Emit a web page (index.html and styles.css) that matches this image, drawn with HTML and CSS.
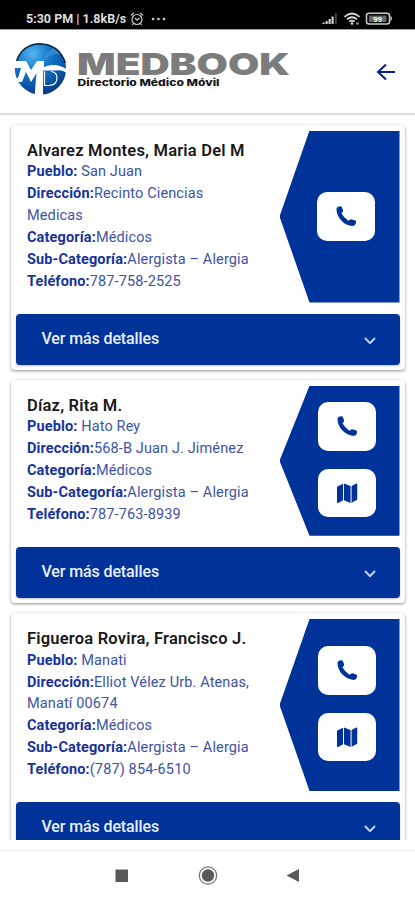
FILE: index.html
```html
<!DOCTYPE html>
<html lang="es">
<head>
<meta charset="utf-8">
<title>MEDBOOK - Directorio Médico Móvil</title>
<link rel="stylesheet" href="styles.css">
</head>
<body>
<svg class="defs" width="0" height="0" aria-hidden="true">
  <symbol id="phone" viewBox="0 0 21 21"><path d="M2.200 .8 4.200 .3Q5.600 .2 6.200 1.500L7.200 4.300Q7.500 5.500 6.600 6.400L5.600 7.500Q7.800 11.800 12.600 15L14.300 14Q15.300 13.500 16.400 13.800L19.300 14.500Q20.700 15 20.600 16.400L20.200 18.300Q19.700 19.900 18 20.300C9.500 21.200 .3 12 .5 3.200 .6 2 1.200 1.200 2.200 .8Z"/></symbol>
  <symbol id="map" viewBox="0 0 21 21"><path d="M0 4.500Q0 3.700.8 3.300L6.200 .8V17.600L1.200 20.400Q0 20.900 0 19.800ZM7.200.5 13.900 3.200V20.500L7.200 17.600ZM14.900 3.200 19.800.6Q21 .1 21 1.300V16.300Q21 17.100 20.300 17.500L14.900 20.300Z"/></symbol>
  <symbol id="chevron" viewBox="0 0 12 8"><path d="M1 1 6 6.200 11 1" fill="none" stroke="#c5d5f5" stroke-width="1.900"/></symbol>
</svg>
<div class="screen">
  <div class="status">
    <span class="clock">5:30 PM | 1.8kB/s</span>
    <svg class="alarm" viewBox="0 0 14 14"><g fill="none" stroke="#ccc" stroke-width="1.200"><circle cx="7" cy="7.500" r="5"/><path d="M1 3.500 3.800 1M13 3.500 10.200 1M4.800 6 7 8 9.600 6M3.500 11.500 2.300 13M10.500 11.500l1.200 1.500"/></g></svg>
    <svg class="dots" viewBox="0 0 15 4"><g fill="#ccc"><circle cx="2" cy="2" r="1.300"/><circle cx="7.500" cy="2" r="1.300"/><circle cx="13" cy="2" r="1.300"/></g></svg>
    <svg class="signals" viewBox="0 0 72 14">
      <g fill="#ccc"><path d="M.5 10.500h2.200V12H.5zM3.500 9h2.200v3H3.500zM6.500 7h2.200v5H6.500zM9.500 4.500h2.200V12H9.500z"/><path fill="#444" d="M13 1h1.800v11H13z"/></g>
      <g fill="none" stroke="#ddd" stroke-width="1.700"><path d="M22.500 4.800Q30 -1.800 37.500 4.800M25 7.300Q30 3.200 35 7.300M27.300 9.700Q30 7.500 32.700 9.700"/></g>
      <circle cx="30" cy="11.500" r="1.300" fill="#ddd"/><path d="M34 10.500h3v2h-3z" fill="#888"/>
      <rect x="44.500" y="1.300" width="23" height="10.800" rx="2.500" fill="none" stroke="#ccc" stroke-width="1.500"/><path d="M68.500 3.500q3 3 0 6z" fill="#ccc"/><rect x="47" y="3.500" width="17.500" height="6.500" fill="#666"/>
      <text x="51" y="10" class="battery">99</text>
    </svg>
  </div>
  <header class="header">
    <svg class="logo" viewBox="0 0 280 60" role="img">
      <defs><radialGradient id="globe" cx=".35" cy=".2" r=".8"><stop offset="0" stop-color="#57b5ef"/><stop offset=".4" stop-color="#1779ca"/><stop offset=".8" stop-color="#0a55ab"/><stop offset="1" stop-color="#063c80"/></radialGradient><clipPath id="disc"><circle cx="26.500" cy="30" r="27"/></clipPath></defs>
      <circle cx="26.500" cy="30" r="25.600" fill="url(#globe)"/>
      <path d="M31 22Q34 14 48 15Q46 11 42 8Q32 12 31 22Z" fill="#4ea1e4" opacity=".5"/>
      <path d="M2.500 22Q8 6 25 4.700Q45 5 51.500 24" fill="none" stroke="#0b2446" stroke-width="1.400"/>
      <g clip-path="url(#disc)">
        <path d="M-1 22H12L17 31 23 22H30V28Q42 23 54 31V36Q50 30.500 42 31.500H29V58H20.500L22.500 34 17 43 12 33 8 43H-1V39H4L7 29H-1Z" fill="#fff"/>
        <path d="M30.500 32.500V46.500H35Q43 46 43 39 43 33 37 32.500" fill="none" stroke="#fff" stroke-width="1.200"/>
      </g>
      <text class="brand" x="63" y="35.700" textLength="213" lengthAdjust="spacingAndGlyphs">MEDBOOK</text>
      <text class="tagline" x="63.500" y="47.200" textLength="142" lengthAdjust="spacingAndGlyphs">Directorio Médico Móvil</text>
    </svg>
    <svg class="back" viewBox="0 0 20 18"><path d="M19 9H2M10 1.500 2 9 10 16.500" fill="none" stroke="#071d91" stroke-width="2"/></svg>
  </header>
  <main class="list">
    <article class="card">
      <div class="top tall">
        <div class="info"><h2>Alvarez Montes, Maria Del M</h2>
          <p><b>Pueblo:</b> San Juan</p><p><b>Dirección:</b>Recinto Ciencias<br>Medicas</p><p><b>Categoría:</b>Médicos</p><p><b>Sub-Categoría:</b>Alergista – Alergia</p><p><b>Teléfono:</b>787-758-2525</p></div>
        <div class="actions single"><a class="btn"><svg><use href="#phone"/></svg></a></div>
      </div>
      <div class="more"><span>Ver más detalles</span><svg><use href="#chevron"/></svg></div>
    </article>
    <article class="card">
      <div class="top">
        <div class="info"><h2>Díaz, Rita M.</h2>
          <p><b>Pueblo:</b> Hato Rey</p><p><b>Dirección:</b>568-B Juan J. Jiménez</p><p><b>Categoría:</b>Médicos</p><p><b>Sub-Categoría:</b>Alergista – Alergia</p><p><b>Teléfono:</b>787-763-8939</p></div>
        <div class="actions"><a class="btn"><svg><use href="#phone"/></svg></a><a class="btn"><svg><use href="#map"/></svg></a></div>
      </div>
      <div class="more"><span>Ver más detalles</span><svg><use href="#chevron"/></svg></div>
    </article>
    <article class="card">
      <div class="top tall">
        <div class="info"><h2>Figueroa Rovira, Francisco J.</h2>
          <p><b>Pueblo:</b> Manati</p><p><b>Dirección:</b>Elliot Vélez Urb. Atenas,<br>Manatí 00674</p><p><b>Categoría:</b>Médicos</p><p><b>Sub-Categoría:</b>Alergista – Alergia</p><p><b>Teléfono:</b>(787) 854-6510</p></div>
        <div class="actions"><a class="btn"><svg><use href="#phone"/></svg></a><a class="btn"><svg><use href="#map"/></svg></a></div>
      </div>
      <div class="more"><span>Ver más detalles</span><svg><use href="#chevron"/></svg></div>
    </article>
  </main>
  <nav class="nav">
    <svg viewBox="0 0 415 50"><rect x="115.500" y="18.500" width="12.500" height="12.500" fill="#5a5a5a"/><circle cx="208" cy="24.500" r="8.700" fill="none" stroke="#777" stroke-width="1.300"/><circle cx="208" cy="24.500" r="6.200" fill="#5a5a5a"/><path d="M286.500 24.500 299 18V31Z" fill="#5a5a5a"/></svg>
  </nav>
</div>
</body>
</html>
```
FILE: styles.css
```css
* { box-sizing: border-box; }
body { margin: 0; background: #fff; font-family: Roboto, "Liberation Sans", sans-serif; }
.defs { display: block; height: 0; }
.screen { display: flex; flex-direction: column; width: 415px; height: 900px; overflow: hidden; }
.status { display: flex; align-items: center; flex: none; height: 29px; padding: 8px 26px 0; background: #000; color: #ddd; }
.clock { width: 104px; font-size: 12.5px; font-weight: 700; line-height: 20px; white-space: nowrap; }
.alarm { width: 14px; height: 14px; }
.dots { width: 15px; height: 4px; margin-left: 7px; }
.signals { width: 72px; height: 14px; margin-left: auto; margin-right: -5px; }
.battery { font: 700 8px Roboto, sans-serif; fill: #fff; }
.header { display: flex; flex: none; justify-content: space-between; align-items: center; height: 86px; padding: 0 19px 0 14px; border-top: 1px solid #999; border-bottom: 2px solid #dcdcdc; }
.logo { width: 280px; height: 60px; margin-top: -6px; }
.brand { font: 900 30px Inter, sans-serif; fill: #7c7c7c; }
.tagline { font: 800 9.2px Inter, sans-serif; fill: #151515; }
.back { width: 20px; height: 18px; }
.list { display: flex; flex-direction: column; gap: 10px; height: 725px; padding: 9.5px 10px 0 11px; overflow: hidden; }
.card { flex: none; padding: 6px 5.5px 5.200px 5px; border-radius: 4px; background: #fff; box-shadow: 0 1px 3px rgba(0,0,0,.45); }
.top { display: flex; justify-content: space-between; height: 150px; margin-bottom: 11px; }
.top.tall { height: 172px; }
.info { padding: 10.300px 0 0 11px; color: #3c53a4; white-space: nowrap; }
h2 { margin: 0; font-size: 16.5px; line-height: 20.500px; font-weight: 600; letter-spacing: .2px; color: #181818; }
p { margin: 0; font-size: 14.500px; line-height: 21.900px; letter-spacing: .13px; }
b { font-weight: 700; color: #17339a; }
.actions { display: flex; flex: none; flex-direction: column; align-items: center; justify-content: center; gap: 18px; width: 120px; padding: 0 0 2px 15.500px; background: #003399; clip-path: polygon(25% 0, 100% 0, 100% 100%, 25% 100%, 0 50%); }
.single { padding: 0 0 0 13px; }
.btn { display: flex; align-items: center; justify-content: center; width: 58px; height: 48.500px; border-radius: 10px; background: #fff; }
.btn svg { width: 20.500px; height: 20.500px; fill: #003399; }
.more { display: flex; align-items: center; justify-content: space-between; height: 51px; padding: 0 23.500px 0 25.500px; border-radius: 4px; background: #003399; color: #e9efff; box-shadow: 0 1px 2px rgba(0,0,0,.25); }
.more span { margin-top: -1px; font-size: 16px; font-weight: 500; letter-spacing: -.12px; }
.more svg { width: 12px; height: 8px; margin-top: 4px; }
.nav { flex: none; height: 50px; margin-top: 10px; border-top: 1px solid #f0f0f0; background: #fff; }
.nav svg { display: block; width: 415px; height: 50px; }
```
